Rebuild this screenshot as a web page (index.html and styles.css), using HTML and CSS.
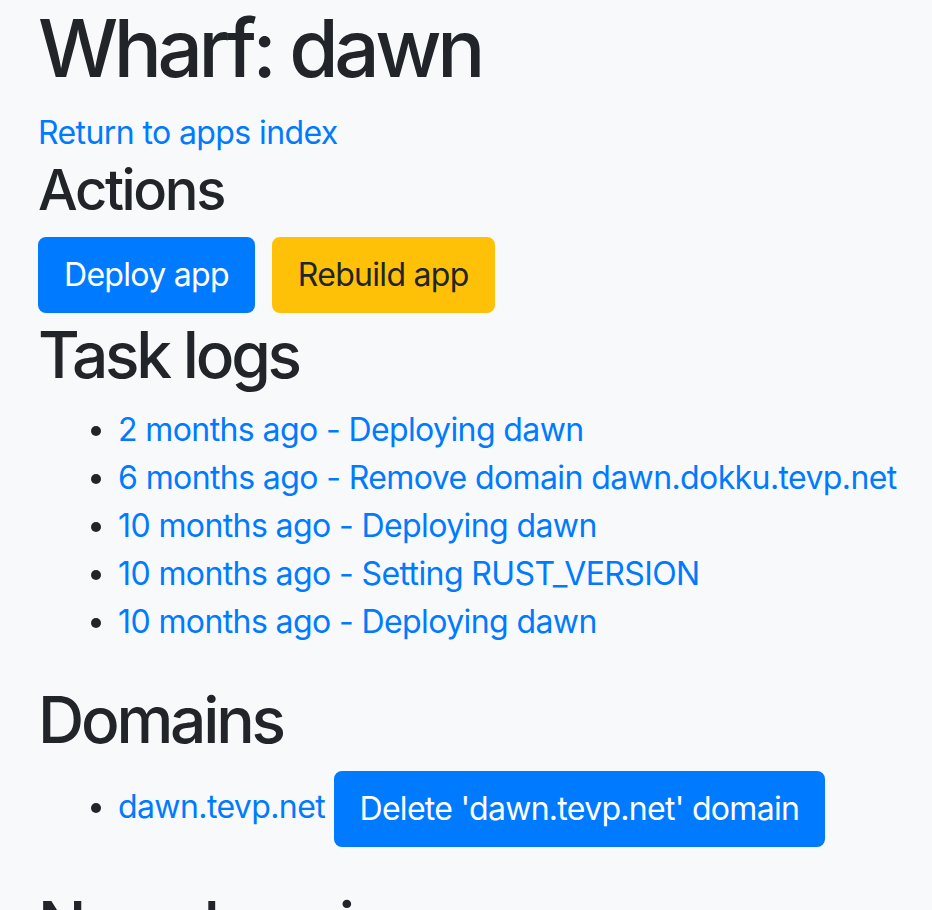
FILE: index.html
```html
<!DOCTYPE html>
<html lang="en">
<head>
<meta charset="utf-8">
<title>Wharf: dawn</title>
<link rel="stylesheet" href="styles.css">
</head>
<body>
<div class="container">
  <h1 class="title">Wharf: dawn</h1>
  <a class="link" href="#">Return to apps index</a>
  <h3 class="h3">Actions</h3>
  <div class="actions">
    <form class="inline-form"><button type="button" class="btn btn-primary">Deploy app</button></form>
    <form class="inline-form"><button type="button" class="btn btn-warning">Rebuild app</button></form>
  </div>
  <h2 class="h2">Task logs</h2>
  <ul class="list">
    <li><a class="link" href="#">2 months ago - Deploying dawn</a></li>
    <li><a class="link" href="#">6 months ago - Remove domain dawn.dokku.tevp.net</a></li>
    <li><a class="link" href="#">10 months ago - Deploying dawn</a></li>
    <li><a class="link" href="#">10 months ago - Setting RUST_VERSION</a></li>
    <li><a class="link" href="#">10 months ago - Deploying dawn</a></li>
  </ul>
  <h2 class="h2">Domains</h2>
  <ul class="list list-domains">
    <li><a class="link" href="#">dawn.tevp.net</a> <form class="inline-form"><button type="button" class="btn btn-primary">Delete 'dawn.tevp.net' domain</button></form></li>
  </ul>
  <h2 class="h2">New domain</h2>
</div>
</body>
</html>
```
FILE: styles.css
```css
html, body {
  margin: 0;
  padding: 0;
}
body {
  background: #f8f9fa;
  color: #212529;
  font-family: Inter, "Liberation Sans", sans-serif;
  font-size: 32px;
  line-height: 1.5;
  letter-spacing: -0.6px;
}
.container {
  padding: 0 10px 0 38px;
}
.title {
  font-size: 80px;
  font-weight: 550;
  line-height: 1.2;
  letter-spacing: -0.055em;
  margin: 0 0 13px;
}
.h2 {
  font-size: 64px;
  font-weight: 550;
  line-height: 1.2;
  letter-spacing: -0.05em;
  margin: 0 0 12px;
  padding-top: 4px;
}
.h3 {
  font-size: 56px;
  font-weight: 550;
  line-height: 1.2;
  letter-spacing: -0.042em;
  margin: 0 0 13px;
}
.link {
  color: #007bff;
  text-decoration: none;
}
.actions {
  display: flex;
  gap: 17px;
}
.inline-form {
  display: inline;
  margin: 0;
}
.btn {
  display: inline-block;
  font-family: inherit;
  font-size: 32px;
  line-height: 1.5;
  font-weight: 400;
  letter-spacing: -0.7px;
  padding: 12px 24px;
  border: 2px solid transparent;
  border-radius: 8px;
  cursor: pointer;
  vertical-align: middle;
}
.btn-primary {
  background: #007bff;
  border-color: #007bff;
  color: #fff;
}
.btn-warning {
  background: #ffc107;
  border-color: #ffc107;
  color: #212529;
}
.list {
  margin: 0 0 32px;
  padding-left: 80px;
}
.list-domains {
  margin-bottom: 36px;
}
```
